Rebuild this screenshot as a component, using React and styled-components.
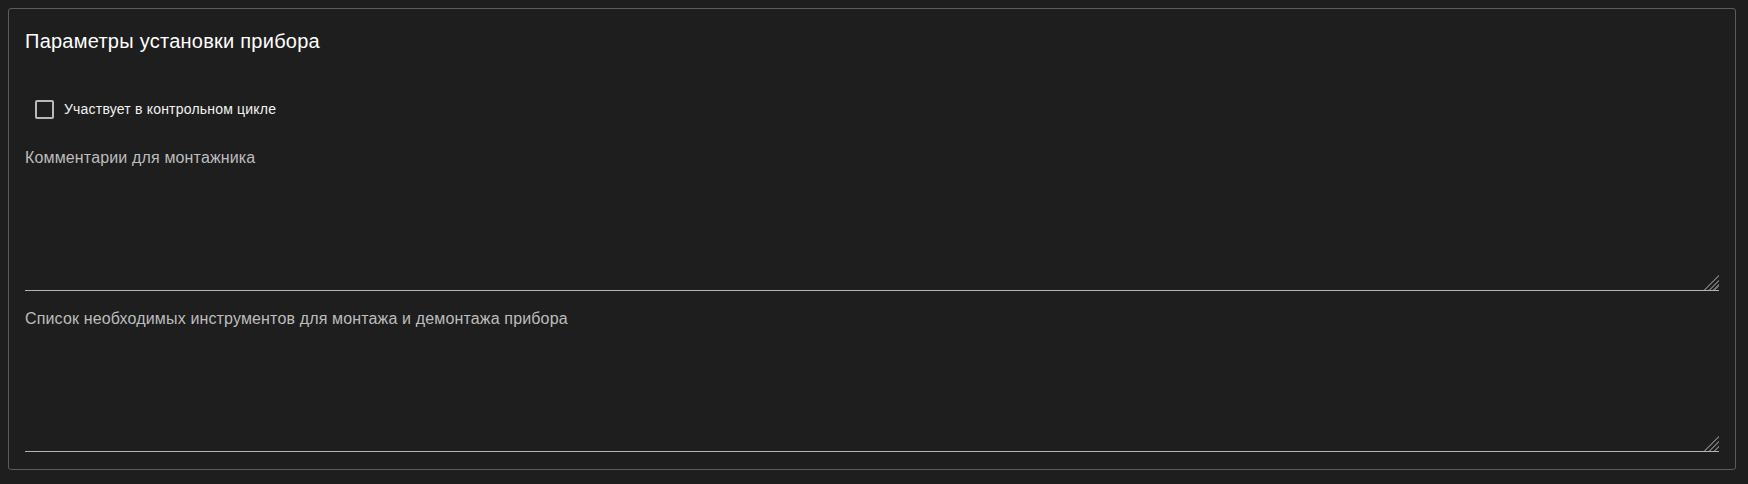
import React from "react";
import styled, { createGlobalStyle } from "styled-components";

const GlobalStyle = createGlobalStyle`
  html, body {
    margin: 0;
    padding: 0;
    background: #1e1e1e;
    color-scheme: dark;
  }

  body {
    padding: 8px 12px 8px 8px;
    font-family: "Liberation Sans", Arial, sans-serif;
  }
`;

function App() {
  const [checked, setChecked] = React.useState(false);

  return (
    <>
      <GlobalStyle />
      <Card>
        <Title>Параметры установки прибора</Title>
        <CheckRow>
          <Checkbox
            type="checkbox"
            checked={checked}
            onChange={(e) => setChecked(e.target.checked)}
          />
          <CheckLabel>Участвует в контрольном цикле</CheckLabel>
        </CheckRow>
        <Fields>
          <TextArea placeholder="Комментарии для монтажника" />
          <TextArea placeholder="Список необходимых инструментов для монтажа и демонтажа прибора" />
        </Fields>
      </Card>
    </>
  );
}

const Card = styled.div`
  display: flex;
  flex-direction: column;
  box-sizing: border-box;
  height: 462px;

  border: 1px solid #5c5c5c;
  border-radius: 3px;
  background: #1e1e1e;

  padding: 16px;
`;

const Title = styled.h2`
  margin: 4px 0 0;
  font-size: 20px;
  line-height: 24px;
  font-weight: 400;
  letter-spacing: 0.25px;
  color: #ffffff;
`;

const CheckRow = styled.label`
  display: flex;
  align-items: center;
  column-gap: 10px;

  margin: 47px 0 0 10px;
  cursor: pointer;
`;

const Checkbox = styled.input`
  appearance: none;
  margin: 0;
  width: 19px;
  height: 19px;
  box-sizing: border-box;

  border: 2px solid #b9b9b9;
  border-radius: 2px;
  background: transparent;
  cursor: pointer;

  &:checked {
    background: #b9b9b9;
  }
`;

const CheckLabel = styled.span`
  font-size: 14px;
  line-height: 19px;
  letter-spacing: 0.2px;
  color: #f2f2f2;
`;

const Fields = styled.div`
  display: flex;
  flex-direction: column;
  row-gap: 19px;

  margin-top: 30px;
`;

const TextArea = styled.textarea`
  display: block;
  box-sizing: border-box;
  width: 100%;
  height: 142px;
  padding: 0;
  margin: 0;

  background: transparent;
  border: none;
  border-bottom: 1px solid #b3b3b3;
  outline: none;
  resize: vertical;

  font-family: "Liberation Sans", Arial, sans-serif;
  font-size: 16px;
  letter-spacing: 0.15px;
  color: #e6e6e6;

  &::placeholder {
    color: #bdbdbd;
  }

  &::-webkit-resizer {
    background: linear-gradient(
      135deg,
      transparent 0 48%,
      #6e6e6e 48% 55%,
      transparent 55% 64%,
      #6e6e6e 64% 71%,
      transparent 71% 80%,
      #6e6e6e 80% 87%,
      transparent 87%
    );
  }
`;

export default App;
